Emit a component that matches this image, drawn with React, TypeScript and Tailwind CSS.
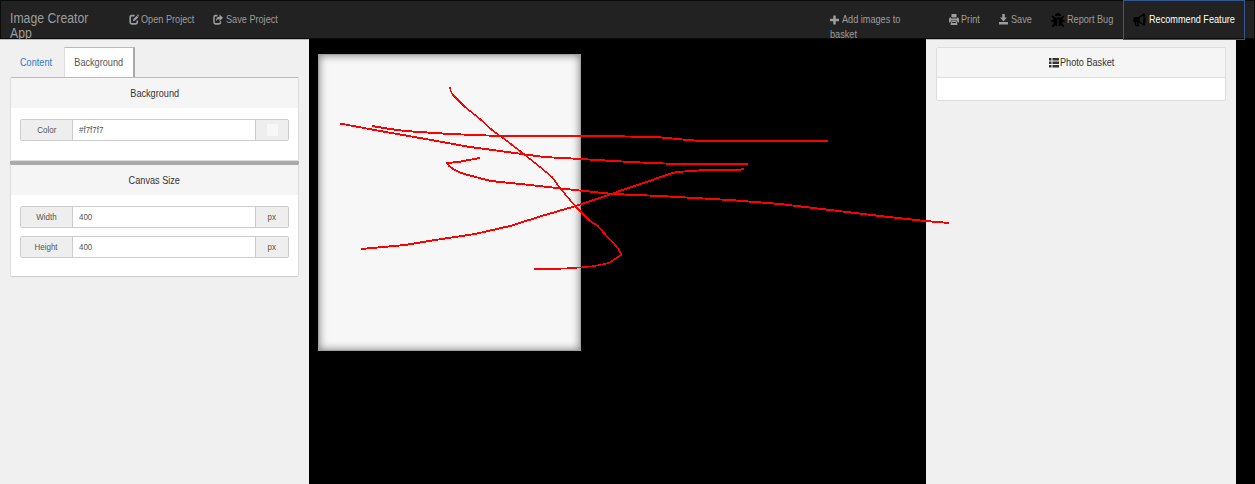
import type { ReactNode } from "react";
import { FaBug } from "react-icons/fa";

type TProps = { children: ReactNode; className?: string };

function T({ children, className = "scale-x-[.795]" }: TProps) {
  return <span className={`inline-block whitespace-nowrap ${className}`}>{children}</span>;
}

function L({ children }: { children: ReactNode }) {
  return <T className="origin-left scale-x-[.795]">{children}</T>;
}

const icon = "block shrink-0";

function EditIcon() {
  return (
    <svg className={icon} width="10" height="11" viewBox="0 0 18 20" fill="none" stroke="currentColor">
      <path d="M10 3H5Q2 3 2 6V15Q2 18 5 18H12Q15 18 15 15V12" strokeWidth="3" />
      <path d="M7 13L8 9L14 3L17 6L11 12Z" fill="currentColor" stroke="none" />
      <path d="M14.5 2L16 .5L18 3L17 5Z" fill="currentColor" stroke="none" />
    </svg>
  );
}
function ShareIcon() {
  return (
    <svg className={icon} width="10" height="11" viewBox="0 0 20 20" preserveAspectRatio="none" fill="none" stroke="currentColor">
      <path d="M9 3H5Q2 3 2 6V15Q2 18 5 18H12Q15 18 15 15V13" strokeWidth="3" />
      <path d="M6 13Q6 5 13 5V1L20 7L13 13V9Q8 9 6 13Z" fill="currentColor" stroke="none" />
    </svg>
  );
}
function PlusIcon() {
  return (
    <svg className={icon} width="9" height="10" viewBox="0 0 18 20" fill="currentColor">
      <path d="M6.500 1H11.500V7.500H18V12.500H11.500V19H6.500V12.500H0V7.500H6.500Z" />
    </svg>
  );
}
function PrintIcon() {
  return (
    <svg className={icon} width="10" height="11" viewBox="0 0 20 22" fill="currentColor">
      <path d="M5 0H15V7H5ZM2 7H4V9H16V7H18Q20 8 20 10V17H17L16 13H4L3 17H0V10Q0 8 2 7Z" />
      <path fillRule="evenodd" d="M5 14H15L17 22H3ZM6.500 16L6 18H14L13.500 16Z" />
    </svg>
  );
}
function SaveIcon() {
  return (
    <svg className={icon} width="9" height="11" viewBox="0 0 18 22" fill="currentColor">
      <path d="M6.500 0H11.500V7H16L9 15L2 7H6.500Z" />
      <path d="M0 16H18V21H0Z" />
    </svg>
  );
}
function HornIcon() {
  return (
    <svg className={icon} width="13" height="14" viewBox="0 0 26 28" fill="none" stroke="#000" strokeWidth="2.500">
      <path d="M2 10L12 9L22 2V24L12 18L2 17Z" strokeLinejoin="round" />
      <path d="M12 9V18M22 2Q26 13 22 24M4 17L6 25H11L9 18" />
      <path d="M2 10L12 9V18L2 17Z" fill="#000" stroke="none" />
    </svg>
  );
}
function ListIcon() {
  return (
    <svg className={icon} width="10" height="10" viewBox="0 0 20 20" fill="currentColor">
      <path d="M0 0H5V5H0ZM7 0H20V5H7ZM0 7H5V12H0ZM7 7H20V12H7ZM0 14H5V19H0ZM7 14H20V19H7Z" />
    </svg>
  );
}

function Field({ label, value, suffix }: { label: string; value: string; suffix: ReactNode }) {
  return (
    <div className="flex h-[22px] w-[269px] overflow-hidden rounded-[2px] border border-[#ccc] bg-white text-[9px] text-[#555]">
      <div className="flex w-[52px] items-center justify-center border-r border-[#ccc] bg-[#eee]"><T className="scale-x-[.886]">{label}</T></div>
      <div className="flex flex-1 items-center pl-[6px]"><T className="origin-left scale-x-[.886]">{value}</T></div>
      <div className="flex w-[33px] items-center justify-center border-l border-[#ccc] bg-[#eee]">{suffix}</div>
    </div>
  );
}

const strokes = [
  "M340 123.500L380 131L420 138L470 147L500 151L544 157L581 159L630 162L676 164H748",
  "M372 126L390 129L405 131L450 134L500 136H600L656 137L688 140L701 141H828",
  "M480 158L458 162L447 163Q450 169 464 174L491 181L530 185L575 190L613 194L660 196L730 200L780 204L830 210L880 216L925 221L949 223",
  "M361 249L405 245L435 240L475 234L510 226L545 215L576 206L620 191L655 179Q668 174 677 172L705 170H738L744 169",
];

export default function App() {
  return (
    <div className="relative flex h-[484px] w-[1255px] flex-col overflow-hidden bg-black font-['Liberation_Sans',Arial,sans-serif] text-[11.5px] leading-[15px] text-[#333]">
      <header className="flex h-[39px] shrink-0 bg-[#222] text-[#9d9d9d] shadow-[inset_0_0_0_1px_#0b0b0b]">
        <div className="h-[39px] w-[120px] overflow-hidden pt-[11px] pl-[10px] text-[14px] leading-[15px]">
          <T className="origin-left scale-x-[.875]">Image Creator</T><br /><T className="origin-left scale-x-[.875]">App</T>
        </div>
        <div className="flex h-[39px] w-[84px] items-center gap-[2px] pl-[9px]"><EditIcon /><L>Open Project</L></div>
        <div className="flex h-[39px] w-[617px] items-center gap-[3px] pl-[9px]"><ShareIcon /><L>Save Project</L></div>
        <div className="h-[39px] w-[119px] overflow-hidden pt-[12px] pl-[9px]">
          <div className="flex h-[15px] items-center gap-[3px]"><PlusIcon /><L>Add images to</L></div>
          <div className="h-[15px] leading-[14px]"><L>basket</L></div>
        </div>
        <div className="flex h-[39px] w-[50px] items-center gap-[2px] pl-[9px]"><PrintIcon /><L>Print</L></div>
        <div className="flex h-[39px] w-[52px] items-center gap-[3px] pl-[9px]"><SaveIcon /><L>Save</L></div>
        <div className="flex h-[39px] w-[81px] items-center gap-[2px] pl-[9px]"><FaBug className="h-[14px] w-[14px] shrink-0 text-black" /><L>Report Bug</L></div>
        <div className="z-10 flex h-[40px] w-[122px] shrink-0 items-center gap-[3px] border border-[#34578f] pb-px pl-[9px] text-white"><HornIcon /><L>Recommend Feature</L></div>
      </header>
      <div className="flex flex-1">
        <aside className="w-[309px] border-t border-[#bbb] bg-[#f0f0f0] px-[10px] pt-[7px]">
          <div className="flex h-[30px]">
            <div className="flex w-[54px] items-center pl-[10px] text-[#337ab7]"><L>Content</L></div>
            <div className="flex w-[71px] items-center justify-center border-t border-r-2 border-l border-t-[#bbb] border-r-[#aaa] border-l-[#ddd] bg-white text-[#555]"><T>Background</T></div>
          </div>
          <section className="h-[84px] w-[289px] rounded-[2px] border border-[#ddd] border-t-[#bbb] bg-white">
            <h2 className="flex h-[30px] items-center justify-center bg-[#f5f5f5]"><T>Background</T></h2>
            <div className="px-[9px] pt-[11px]"><Field label="Color" value="#f7f7f7" suffix={<i className="block h-[12px] w-[11px] bg-[#f7f7f7]" />} /></div>
          </section>
          <div className="h-[3px] w-[289px] bg-[#aaa]" />
          <section className="h-[113px] w-[289px] rounded-b-[2px] border border-[#ddd] border-t-[#aaa] border-b-[#ccc] bg-white">
            <h2 className="flex h-[30px] items-center justify-center bg-[#f5f5f5]"><T>Canvas Size</T></h2>
            <div className="flex flex-col gap-[8px] px-[9px] pt-[11px]">
              <Field label="Width" value="400" suffix={<T className="scale-x-[.886]">px</T>} />
              <Field label="Height" value="400" suffix={<T className="scale-x-[.886]">px</T>} />
            </div>
          </section>
        </aside>
        <main className="w-[617px] pt-[15px] pl-[9px]">
          <div className="h-[297px] w-[263px] border border-[#a0a0a0] bg-[#f7f7f7] shadow-[inset_0_0_8px_0_#777]" />
        </main>
        <aside className="w-[310px] border-t border-[#bbb] bg-[#f0f0f0] px-[10px] pt-[7px]">
          <section className="h-[54px] w-[290px] overflow-hidden rounded-[2px] border border-[#ddd] bg-white">
            <h2 className="flex h-[30px] items-center justify-center border-b border-[#ddd] bg-[#f5f5f5]">
              <ListIcon /><div className="w-[55px] pl-px"><L>Photo Basket</L></div>
            </h2>
          </section>
        </aside>
      </div>
      <svg className="pointer-events-none absolute inset-0" width="1255" height="484" fill="none" stroke="#f00" shapeRendering="crispEdges">
        {strokes.map((d) => <path key={d} d={d} strokeWidth="1.900" />)}
        <path strokeWidth="1.600" d="M450 87Q450 91 453 95L465 107L480 119L492 130L507 141L525 155L540 167L552 177L560 188L575 206L590 221L598 226L604 233L616 246Q621 252 621 255L610 262.500Q600 266 580 267.500L556 269H534" />
      </svg>
    </div>
  );
}
